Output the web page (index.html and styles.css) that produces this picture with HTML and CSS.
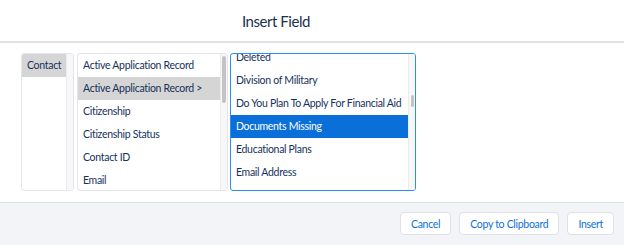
FILE: index.html
```html
<!DOCTYPE html>
<html>
<head>
<meta charset="utf-8">
<link rel="stylesheet" href="styles.css">
</head>
<body>
<div class="modal">
  <div class="header"><h1 class="title">Insert Field</h1></div>
  <div class="content">
    <div class="col col1">
      <div class="list">
        <div class="row sel-gray">Contact</div>
      </div>
      <div class="track"></div>
    </div>
    <div class="col col2">
      <div class="list">
        <div class="row">Active Application Record</div>
        <div class="row sel-gray">Active Application Record &gt;</div>
        <div class="row">Citizenship</div>
        <div class="row">Citizenship Status</div>
        <div class="row">Contact ID</div>
        <div class="row">Email</div>
      </div>
      <div class="track"><div class="thumb thumb2"></div></div>
    </div>
    <div class="col col3">
      <div class="list">
        <div class="inner">
          <div class="row">Deleted</div>
          <div class="row">Division of Military</div>
          <div class="row">Do You Plan To Apply For Financial Aid</div>
          <div class="row sel-blue">Documents Missing</div>
          <div class="row">Educational Plans</div>
          <div class="row">Email Address</div>
        </div>
      </div>
      <div class="track"><div class="thumb thumb3"></div></div>
    </div>
  </div>
  <div class="footer">
    <button class="btn">Cancel</button>
    <button class="btn">Copy to Clipboard</button>
    <button class="btn">Insert</button>
  </div>
</div>
</body>
</html>
```
FILE: styles.css
```css
* { box-sizing: border-box; }
html, body { margin: 0; padding: 0; background: #fff; }
body {
  width: 624px;
  height: 245px;
  overflow: hidden;
  font-family: Lato, "Open Sans", sans-serif;
  color: #16325c;
}
.modal { display: flex; flex-direction: column; height: 245px; }
.header {
  height: 43px;
  border-bottom: 2px solid #dfe2e9;
  display: flex;
  align-items: center;
  justify-content: center;
  padding-right: 72px;
}
.title {
  margin: 0;
  font-size: 15px;
  letter-spacing: -0.45px;
  font-weight: 400;
  color: #1d2f4f;
}
.content {
  height: 160px;
  padding: 10px 0 0 21px;
  display: flex;
  align-items: flex-start;
  border-bottom: 1px solid #dfe2e9;
}
.col {
  height: 138px;
  border: 1px solid #e3e6ec;
  border-radius: 3px;
  display: flex;
  overflow: hidden;
  background: #fff;
}
.col1 { width: 53px; margin-right: 3px; }
.col2 { width: 151px; margin-right: 2px; }
.col3 { width: 186px; border-color: #2b8ef0; }
.list { flex: 1; overflow: hidden; position: relative; }
.inner { margin-top: -8px; }
.row {
  height: 23px;
  line-height: 23px;
  padding-left: 5px;
  font-size: 10.5px;
  letter-spacing: -0.3px;
  white-space: nowrap;
  color: #16325c;
}
.sel-gray { background: #d5d5d5; }
.sel-blue { background: #0a6fd8; color: #fff; }
.track {
  width: 7px;
  background: #f7f7f7;
  border-left: 1px solid #ececec;
  position: relative;
}
.thumb {
  position: absolute;
  left: 1px;
  width: 4px;
  border-radius: 2px;
  background: #c4c4c4;
}
.thumb2 { top: 2px; height: 47px; }
.thumb3 { top: 41px; height: 12px; left: 2px; width: 3px; }
.footer {
  flex: 1;
  background: #f3f4f8;
  display: flex;
  justify-content: flex-end;
  align-items: flex-start;
  padding: 9px 10px 0 0;
  gap: 8px;
}
.btn {
  height: 23px;
  padding: 0 10px;
  background: #fff;
  border: 1px solid #dde1e9;
  border-radius: 4px;
  color: #0a6fd8;
  font-family: Lato, "Open Sans", sans-serif;
  font-size: 10.5px;
  letter-spacing: -0.3px;
}
```
